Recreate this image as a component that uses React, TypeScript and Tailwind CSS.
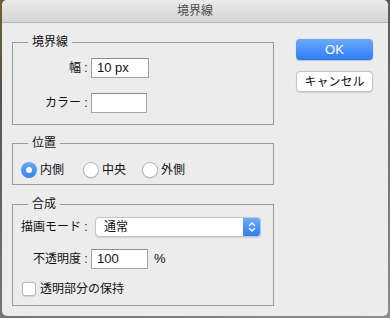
import React from "react";

const FONT = "font-['Liberation_Sans','Noto_Sans_CJK_JP',sans-serif]";

function Legend({ children }: { children: React.ReactNode }) {
  return (
    <legend className="ml-[15px] px-[4px] text-[12px] leading-[16px] text-[#111]">
      {children}
    </legend>
  );
}

function Label({ text }: { text: string }) {
  return (
    <div className="flex w-[78px] shrink-0 justify-end text-[12px] leading-[16px] text-[#111]">
      <span>{text}</span>
      <span className="w-[10px] text-center">:</span>
    </div>
  );
}

function TextBox({ value, w }: { value: string; w: string }) {
  return (
    <div
      className={`${w} h-[20px] border border-[#a3a3a3] border-t-[#8c8c8c] bg-white pl-[5px] text-[13px] leading-[18px] text-[#111]`}
    >
      {value}
    </div>
  );
}

function Radio({ checked, label }: { checked?: boolean; label: string }) {
  return (
    <div className="flex items-center gap-[3px]">
      {checked ? (
        <div className="flex h-[16px] w-[16px] items-center justify-center rounded-full bg-[linear-gradient(#62a6fb,#3583f7)]">
          <div className="h-[6px] w-[6px] rounded-full bg-white" />
        </div>
      ) : (
        <div className="h-[16px] w-[16px] rounded-full border border-[#b8b8b8] bg-white shadow-[0_0.5px_1px_rgba(0,0,0,0.15)]" />
      )}
      <span className="text-[12px] leading-[16px] text-[#111]">{label}</span>
    </div>
  );
}

export default function App() {
  return (
    <div className={`h-[318px] w-[390px] bg-[linear-gradient(160deg,#6e6128_0%,#55524a_20%,#8c8c8c_100%)] ${FONT}`}>
      <div className="ml-[2px] flex h-[316px] w-[386px] flex-col overflow-hidden rounded-[5px] bg-[#ececec]">
        {/* Title bar */}
        <div className="flex h-[23px] shrink-0 items-center justify-center border-b border-[#b4b4b4] bg-[linear-gradient(#ebebeb,#d5d5d5)] pb-[1px] text-[12px] text-[#4a4a4a]">
          境界線
        </div>

        <div className="flex pl-[10px] pt-[11px]">
          {/* Left column */}
          <div className="flex w-[262px] flex-col">
            <fieldset className="border border-[#9a9a9a] pb-[11px]">
              <Legend>境界線</Legend>
              <div className="mt-[8px] flex items-center">
                <Label text="幅" />
                <TextBox value="10 px" w="w-[58px]" />
              </div>
              <div className="mt-[15px] flex items-center">
                <Label text="カラー" />
                <TextBox value="" w="w-[56px]" />
              </div>
            </fieldset>

            <fieldset className="mt-[10px] border border-[#9a9a9a] pb-[6px]">
              <Legend>位置</Legend>
              <div className="mt-[11px] flex items-center pl-[8px]">
                <Radio checked label="内側" />
                <div className="ml-[19px]">
                  <Radio label="中央" />
                </div>
                <div className="ml-[16px]">
                  <Radio label="外側" />
                </div>
              </div>
            </fieldset>

            <fieldset className="mt-[11px] border border-[#9a9a9a] pb-[8px]">
              <Legend>合成</Legend>
              <div className="mt-[5px] flex items-center">
                <Label text="描画モード" />
                <div className="ml-[4px] flex h-[20px] w-[166px] overflow-hidden rounded-[4px] border border-[#c6c6c6] bg-white shadow-[0_0.5px_1px_rgba(0,0,0,0.12)]">
                  <div className="flex-1 pl-[8px] text-[12px] leading-[18px] text-[#111]">通常</div>
                  <div className="flex w-[17px] items-center justify-center bg-[linear-gradient(#6aabfb,#2f7ef6)]">
                    <svg width="8" height="12" viewBox="0 0 8 12" fill="none" stroke="white" strokeWidth="1.4" strokeLinecap="round" strokeLinejoin="round">
                      <path d="M1.5 4.5 L4 2 L6.5 4.5" />
                      <path d="M1.5 7.5 L4 10 L6.5 7.5" />
                    </svg>
                  </div>
                </div>
              </div>
              <div className="mt-[12px] flex items-center">
                <Label text="不透明度" />
                <TextBox value="100" w="w-[57px]" />
                <span className="ml-[6px] text-[13px] text-[#111]">%</span>
              </div>
              <div className="mt-[12px] flex items-center gap-[4px] pl-[9px]">
                <div className="h-[14px] w-[14px] rounded-[3px] border border-[#b8b8b8] bg-white shadow-[0_0.5px_1px_rgba(0,0,0,0.12)]" />
                <span className="text-[12px] leading-[16px] text-[#111]">透明部分の保持</span>
              </div>
            </fieldset>
          </div>

          {/* Buttons */}
          <div className="ml-[22px] flex w-[77px] flex-col pt-[5px]">
            <div className="flex h-[21px] items-center justify-center rounded-[4px] bg-[linear-gradient(#69a9fb,#2d7cf6)] text-[13px] text-white shadow-[0_0.5px_1px_rgba(0,0,0,0.2)]">
              OK
            </div>
            <div className="mt-[11px] flex h-[21px] items-center justify-center rounded-[4px] border border-[#c4c4c4] bg-white text-[12px] text-[#111] shadow-[0_0.5px_1px_rgba(0,0,0,0.12)]">
              キャンセル
            </div>
          </div>
        </div>
      </div>
    </div>
  );
}
